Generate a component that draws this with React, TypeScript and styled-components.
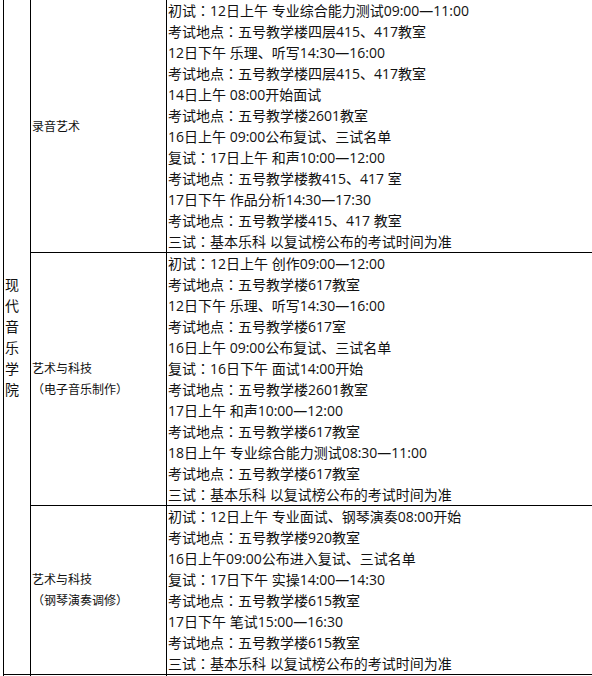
import React from 'react';
import styled, { createGlobalStyle } from 'styled-components';

/** Page reset */
const GlobalStyle = createGlobalStyle`
  html, body {
    margin: 0;
    padding: 0;
    background: #fff;
    height: 676px;
    overflow: hidden;
  }
  body {
    font-family: "Open Sans", "Noto Sans CJK SC", sans-serif;
    color: #111;
  }
`;

type Session = {
  major: string[];
  lines: string[];
};

const sessions: Session[] = [
  {
    major: ['录音艺术'],
    lines: [
      '初试：12日上午 专业综合能力测试09:00—11:00',
      '考试地点：五号教学楼四层415、417教室',
      '12日下午 乐理、听写14:30—16:00',
      '考试地点：五号教学楼四层415、417教室',
      '14日上午 08:00开始面试',
      '考试地点：五号教学楼2601教室',
      '16日上午 09:00公布复试、三试名单',
      '复试：17日上午 和声10:00—12:00',
      '考试地点：五号教学楼教415、417 室',
      '17日下午 作品分析14:30—17:30',
      '考试地点：五号教学楼415、417 教室',
      '三试：基本乐科 以复试榜公布的考试时间为准',
    ],
  },
  {
    major: ['艺术与科技', '（电子音乐制作）'],
    lines: [
      '初试：12日上午 创作09:00—12:00',
      '考试地点：五号教学楼617教室',
      '12日下午 乐理、听写14:30—16:00',
      '考试地点：五号教学楼617室',
      '16日上午 09:00公布复试、三试名单',
      '复试：16日下午 面试14:00开始',
      '考试地点：五号教学楼2601教室',
      '17日上午 和声10:00—12:00',
      '考试地点：五号教学楼617教室',
      '18日上午 专业综合能力测试08:30—11:00',
      '考试地点：五号教学楼617教室',
      '三试：基本乐科 以复试榜公布的考试时间为准',
    ],
  },
  {
    major: ['艺术与科技', '（钢琴演奏调修）'],
    lines: [
      '初试：12日上午 专业面试、钢琴演奏08:00开始',
      '考试地点：五号教学楼920教室',
      '16日上午09:00公布进入复试、三试名单',
      '复试：17日下午 实操14:00—14:30',
      '考试地点：五号教学楼615教室',
      '17日下午 笔试15:00—16:30',
      '考试地点：五号教学楼615教室',
      '三试：基本乐科 以复试榜公布的考试时间为准',
    ],
  },
];

/** Table grid: the black background shows through the 1px gaps as rules.
 *  The right edge runs off the page, so no right rule. */
const Table = styled.div`
  display: grid;
  grid-template-columns: 26px 135px 1fr;
  gap: 1px;
  background: #000;
  border: 1px solid #000;
  border-right: 0;
  margin: -1px 0 0 3px;
`;

const Cell = styled.div`
  background: #fff;
  display: flex;
  flex-direction: column;
  justify-content: center;
  min-width: 0;
  overflow: hidden;
`;

/** School name, written top to bottom */
const SchoolCell = styled(Cell)<{ $rows: number }>`
  grid-row: 1 / span ${({ $rows }) => $rows};
  padding-left: 1px;
  font-size: 14px;
  line-height: 21px;
`;

const MajorCell = styled(Cell)`
  padding-left: 1px;
  font-size: 12px;
  line-height: 21px;
  white-space: nowrap;
`;

const ScheduleCell = styled(Cell)`
  padding-left: 1px;
  font-size: 14px;
  line-height: 21px;
  white-space: nowrap;
`;

const Line = styled.div``;

/** full-width colon, drawn centred in its box as in the source */
const Colon = styled.span`
  font-family: "Noto Sans CJK TC", sans-serif;
`;

const TailCell = styled(Cell)`
  height: 20px;
`;

const renderLine = (text: string) => {
  const parts = text.split('：');
  return parts.map((p, i) => (
    <React.Fragment key={i}>
      {i > 0 && <Colon>：</Colon>}
      {p}
    </React.Fragment>
  ));
};

export default function App() {
  return (
    <>
      <GlobalStyle />
      <Table>
        <SchoolCell $rows={sessions.length}>
          {'现代音乐学院'.split('').map((ch, i) => (
            <Line key={i}>{ch}</Line>
          ))}
        </SchoolCell>
        {sessions.map((s, i) => (
          <React.Fragment key={i}>
            <MajorCell>
              {s.major.map((m, j) => (
                <Line key={j}>{m}</Line>
              ))}
            </MajorCell>
            <ScheduleCell>
              {s.lines.map((l, j) => (
                <Line key={j}>{renderLine(l)}</Line>
              ))}
            </ScheduleCell>
          </React.Fragment>
        ))}
        <TailCell />
        <TailCell />
        <TailCell />
      </Table>
    </>
  );
}
